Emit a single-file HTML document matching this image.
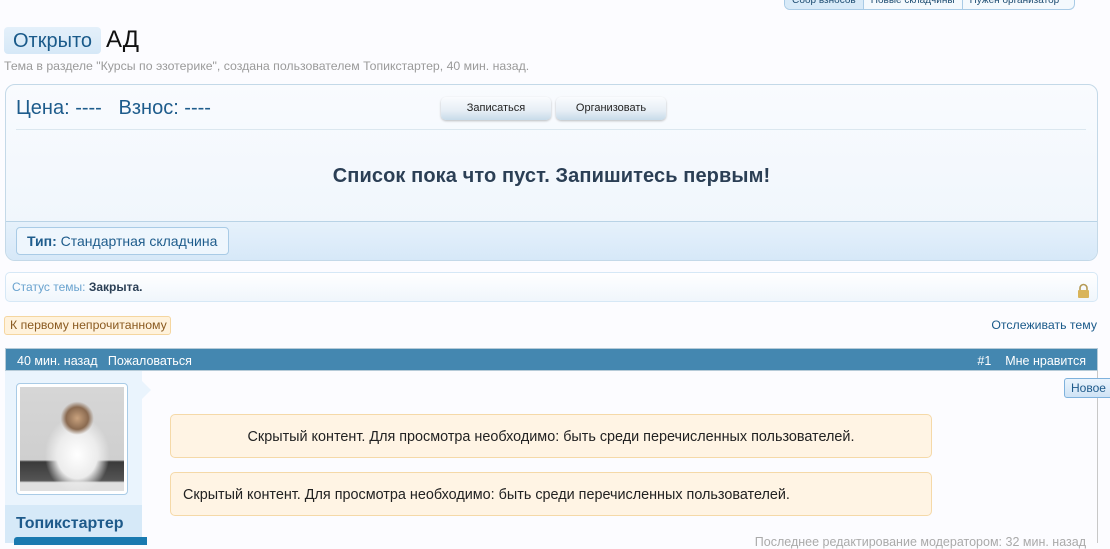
<!DOCTYPE html>
<html><head><meta charset="utf-8"><style>
*{margin:0;padding:0;box-sizing:border-box}
body{width:1110px;height:543px;overflow:hidden;background:#fcfcff;font-family:"Liberation Sans",Arial,sans-serif;position:relative}
.a{position:absolute}
.tabs{left:784px;top:-4px;height:14px;width:291px;border:1px solid #a9cbe6;border-top:none;border-radius:0 0 6px 6px;display:flex;background:#f4f9fd;font-size:10px;color:#1e4d72;overflow:hidden}
.tabs div{border-right:1px solid #a9cbe6;padding:0 7px;line-height:10px;white-space:nowrap}
.tabs div:first-child{background:#d8eaf8}
.tabs div:last-child{border:none}
.btn{height:23px;border-radius:5px;background:linear-gradient(#fafcfe,#e6eef5 60%,#c7dbe9);box-shadow:0 1px 2px rgba(0,0,0,.25);font-size:11px;color:#222;text-align:center;line-height:23px}
.hid{left:170px;width:762px;height:44px;background:#fff4e4;border:1px solid #f5d9a8;border-radius:5px;font-size:14.4px;color:#222;line-height:44px}
</style></head><body>
<div class="a tabs"><div>Сбор взносов</div><div>Новые складчины</div><div>Нужен организатор</div></div>
<div class="a" style="left:4px;top:27px;width:97px;height:27px;background:linear-gradient(#e4f0fa,#d6e8f7);border-radius:4px;font-size:20px;color:#1a5a8a;line-height:28px;text-align:center">Открыто</div>
<div class="a" style="left:106px;top:26px;font-size:24px;color:#111">АД</div>
<div class="a" style="left:4px;top:59px;font-size:12.3px;color:#9a9a9a">Тема в разделе "Курсы по эзотерике", создана пользователем Топикстартер, 40 мин. назад.</div>
<div class="a" style="left:5px;top:84px;width:1093px;height:177px;border:1px solid #c4d9e8;border-radius:10px;background:linear-gradient(#f9fbfe,#eef5fc);overflow:hidden">
 <div class="a" style="left:10px;top:12px;font-size:20px;color:#1e5c8c">Цена: ----&nbsp;&nbsp; Взнос: ----</div>
 <div class="a btn" style="left:435px;top:12px;width:110px">Записаться</div>
 <div class="a btn" style="left:550px;top:12px;width:110px">Организовать</div>
 <div class="a" style="left:10px;top:44px;width:1070px;border-top:1px solid #dbe7ef"></div>
 <div class="a" style="left:0;top:80px;width:1091px;text-align:center;font-size:20px;font-weight:bold;color:#2b3f55;letter-spacing:0.1px">Список пока что пуст. Запишитесь первым!</div>
 <div class="a" style="left:0;top:136px;width:1091px;height:40px;border-top:1px solid #b9d3e6;background:linear-gradient(#e6f1fb,#d6e8f8)"></div>
 <div class="a" style="left:10px;top:142px;width:213px;height:28px;border:1px solid #a9cbe6;border-radius:4px;background:#eef6fd;font-size:14px;color:#1e5c8c;line-height:26px;padding-left:10px"><b>Тип:</b> Стандартная складчина</div>
</div>
<div class="a" style="left:5px;top:272px;width:1093px;height:30px;border:1px solid #d6e8f6;border-radius:5px;background:linear-gradient(#fff,#f0f6fc);font-size:12px;line-height:29px;padding-left:6px;color:#6aa3cf">Статус темы: <b style="color:#2b3f55">Закрыта.</b>
 <div class="a" style="right:6px;top:7px;width:15px;height:15px"><svg width="15" height="15"><path d="M4 7V5a3.5 3.5 0 0 1 7 0v2" fill="none" stroke="#b59a55" stroke-width="1.6"/><rect x="2" y="7" width="11" height="8" rx="1" fill="#d9b45a"/></svg></div>
</div>
<div class="a" style="left:4px;top:316px;width:167px;height:19px;background:#fff2dc;border:1px solid #f5d6a0;border-radius:3px;font-size:12.3px;color:#8a5a20;line-height:17px;padding-left:5px">К первому непрочитанному</div>
<div class="a" style="right:13px;top:318px;font-size:12.3px;color:#1a5a8a">Отслеживать тему</div>
<div class="a" style="left:5px;top:348px;width:1093px;height:23px;background:#4487b0;border:1px solid #b6cbd8;color:#fff;font-size:12.5px;line-height:24px">
 <span class="a" style="left:11px">40 мин. назад&nbsp;&nbsp;&nbsp;Пожаловаться</span>
 <span class="a" style="right:11px">#1&nbsp;&nbsp;&nbsp;&nbsp;Мне нравится</span>
</div>
<div class="a" style="left:1097px;top:371px;height:172px;border-left:1px solid #c8c8c8"></div>
<div class="a" style="left:5px;top:371px;width:137px;height:172px;background:#eaf4fd"></div>
<div class="a" style="left:141px;top:380px;width:0;height:0;border-top:10px solid transparent;border-bottom:10px solid transparent;border-left:10px solid #eaf4fd"></div>
<div class="a" style="left:16px;top:383px;width:112px;height:112px;border:1px solid #a9cbe6;border-radius:4px;background:#fff;padding:3px"><div style="width:100%;height:100%;background:radial-gradient(circle at 55% 30%,#c9a27e 0,#8a6a50 12%,transparent 18%),radial-gradient(ellipse at 55% 65%,#fff 0,#ececec 25%,transparent 40%),linear-gradient(#d6d6d6,#cfcfcf 70%,#3a3a3a 72%,#555 90%,#e0e0e0 92%)"></div></div>
<div class="a" style="left:5px;top:505px;width:137px;height:38px;background:#d6e9f8"></div>
<div class="a" style="left:16px;top:515px;font-size:16px;font-weight:bold;color:#1e5a8a">Топикстартер</div>
<div class="a" style="left:14px;top:537px;width:133px;height:8px;background:#1a7ab0;border-radius:3px 0 0 0"></div>
<div class="a" style="left:1064px;top:378px;width:50px;height:20px;background:linear-gradient(#eaf4fd,#cfe3f5);border:1px solid #7fb2dd;border-radius:3px;font-size:12px;color:#1e5a8a;line-height:18px;padding-left:6px">Новое</div>
<div class="a hid" style="top:414px;text-align:center">Скрытый контент. Для просмотра необходимо: быть среди перечисленных пользователей.</div>
<div class="a hid" style="top:472px;padding-left:12px">Скрытый контент. Для просмотра необходимо: быть среди перечисленных пользователей.</div>
<div class="a" style="right:24px;top:535px;font-size:12.5px;color:#aaa">Последнее редактирование модератором: 32 мин. назад</div>
</body></html>
